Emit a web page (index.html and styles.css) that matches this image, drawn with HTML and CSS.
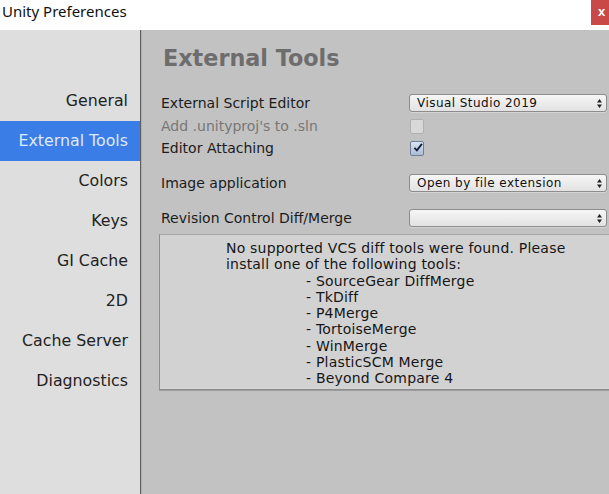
FILE: index.html
```html
<!DOCTYPE html>
<html lang="en">
  <head>
    <meta charset="UTF-8" />
    <title>Unity Preferences</title>
    <link rel="stylesheet" href="styles.css">
  </head>
  <body>
    <div class="titlebar">
      <span class="title">Unity Preferences</span>
      <span class="close">x</span>
    </div>
    <div class="window">
      <div class="sidebar">
        <div class="item">General</div>
        <div class="item selected">External Tools</div>
        <div class="item">Colors</div>
        <div class="item">Keys</div>
        <div class="item">GI Cache</div>
        <div class="item">2D</div>
        <div class="item">Cache Server</div>
        <div class="item">Diagnostics</div>
      </div>
      <div class="main">
        <h1 class="heading">External Tools</h1>
        <div class="row r1">
          <span class="label">External Script Editor</span>
          <div class="popup">Visual Studio 2019<svg class="arrows" width="5" height="9" viewBox="0 0 5 9"><path d="M0 3.5 L2.5 0 L5 3.5 Z M0 5.5 L2.5 9 L5 5.5 Z" fill="#222"/></svg></div>
        </div>
        <div class="row r2">
          <span class="label dim">Add .unityproj's to .sln</span>
          <span class="check off"></span>
        </div>
        <div class="row r3">
          <span class="label">Editor Attaching</span>
          <span class="check on"><svg width="14" height="13" viewBox="0 0 14 13"><path d="M2 7 L5.5 10.5 L12.5 1.5" fill="none" stroke="#0f1f3c" stroke-width="2.6"/></svg></span>
        </div>
        <div class="row r4">
          <span class="label">Image application</span>
          <div class="popup">Open by file extension<svg class="arrows" width="5" height="9" viewBox="0 0 5 9"><path d="M0 3.5 L2.5 0 L5 3.5 Z M0 5.5 L2.5 9 L5 5.5 Z" fill="#222"/></svg></div>
        </div>
        <div class="row r5">
          <span class="label">Revision Control Diff/Merge</span>
          <div class="popup"><svg class="arrows" width="5" height="9" viewBox="0 0 5 9"><path d="M0 3.5 L2.5 0 L5 3.5 Z M0 5.5 L2.5 9 L5 5.5 Z" fill="#222"/></svg></div>
        </div>
        <div class="helpbox">
          <div>No supported VCS diff tools were found. Please</div>
          <div>install one of the following tools:</div>
          <div class="tool">- SourceGear DiffMerge</div>
          <div class="tool">- TkDiff</div>
          <div class="tool">- P4Merge</div>
          <div class="tool">- TortoiseMerge</div>
          <div class="tool">- WinMerge</div>
          <div class="tool">- PlasticSCM Merge</div>
          <div class="tool">- Beyond Compare 4</div>
        </div>
      </div>
    </div>
  </body>
</html>
```
FILE: styles.css
```css
html, body {
  margin: 0;
  padding: 0;
  width: 609px;
  height: 494px;
  overflow: hidden;
}
body {
  font-family: "DejaVu Sans", sans-serif;
  background-color: #c2c2c2;
  display: flex;
  flex-direction: column;
}
.titlebar {
  height: 30px;
  background-color: #ffffff;
  display: flex;
  align-items: flex-start;
  flex-shrink: 0;
}
.title {
  font-family: "Noto Sans", sans-serif;
  font-size: 15px;
  line-height: 22px;
  color: #111;
  padding-left: 2px;
}
.close {
  margin-left: auto;
  width: 18px;
  height: 25px;
  background-color: #c94848;
  color: #fff;
  font-family: "Liberation Sans", sans-serif;
  font-size: 13px;
  font-weight: bold;
  line-height: 24px;
  text-align: center;
  padding-left: 3px;
  box-sizing: border-box;
}
.window {
  flex: 1;
  display: flex;
  min-width: 0;
}
.sidebar {
  width: 140px;
  flex-shrink: 0;
  background-color: #dedede;
  border-right: 1px solid #5e5e5e;
  padding-top: 51px;
}
.item {
  height: 40px;
  line-height: 40px;
  text-align: right;
  padding-right: 12px;
  font-size: 15.8px;
  color: #222;
}
.selected {
  background-color: #3b7de6;
  color: #dfe9fb;
}
.main {
  flex: 1;
  min-width: 0;
  padding: 14px 2px 0 19px;
  border-left: 1px solid #b0b0b0;
}
.heading {
  margin: 0 0 20px 2px;
  font-size: 22.3px;
  line-height: 28px;
  font-weight: bold;
  color: #6d6d6d;
}
.row {
  display: flex;
  align-items: center;
  height: 22px;
}
.r2 {
  margin-top: 1px;
}
.r4, .r5 {
  margin-top: 13px;
}
.label {
  width: 248px;
  flex-shrink: 0;
  font-size: 14px;
  color: #1c1c1c;
}
.dim {
  color: #777;
}
.popup {
  width: 198px;
  height: 18px;
  box-sizing: border-box;
  border: 1px solid #8c8c8c;
  border-radius: 3px;
  background: linear-gradient(#f6f6f6, #e2e2e2);
  box-shadow: 0 1px 0 #d4d4d4;
  font-size: 12px;
  letter-spacing: 0.45px;
  line-height: 16px;
  color: #111;
  padding-left: 7px;
  display: flex;
  align-items: center;
}
.arrows {
  margin-left: auto;
  margin-right: 4px;
}
.check {
  width: 14px;
  height: 15px;
  box-sizing: border-box;
  border-radius: 2px;
  margin-left: 1px;
  display: flex;
  align-items: center;
  justify-content: center;
}
.off {
  border: 1px solid #b0b0b0;
  background-color: #d8d8d8;
}
.on {
  border: 1px solid #6f7f98;
  background: linear-gradient(#dbe4f0, #a9bbd4);
}
.on svg {
  margin-top: -2px;
  margin-left: 2px;
}
.helpbox {
  margin: 5px -2px 0 -2px;
  padding: 5px 0 4px 66px;
  height: 156px;
  box-sizing: border-box;
  background-color: #d2d2d2;
  border: 1px solid #8e8e8e;
  border-top-color: #a6a6a6;
  border-right: none;
  box-shadow: 0 1px 0 #9c9c9c;
  font-size: 14px;
  letter-spacing: 0.2px;
  line-height: 16.25px;
  color: #161616;
}
.tool {
  padding-left: 80px;
}
```
